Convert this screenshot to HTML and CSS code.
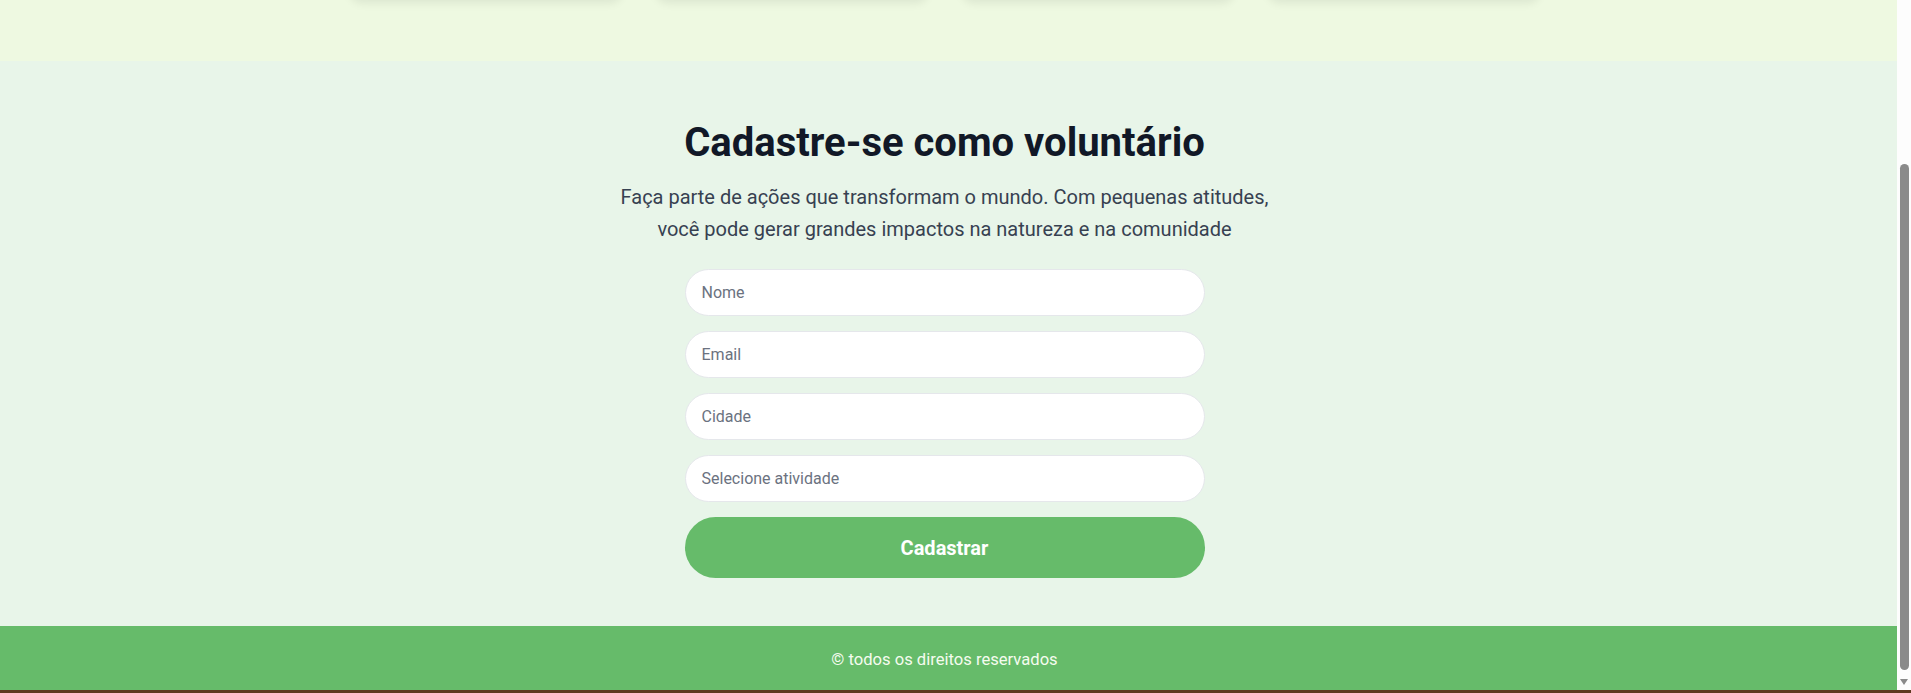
FILE: index.html
```html
<!DOCTYPE html>
<html lang="pt-BR">
<head>
<meta charset="utf-8">
<title>Voluntários</title>
<link rel="stylesheet" href="styles.css">
</head>
<body>
<div class="janela">
  <div class="pagina">
    <section class="acoes">
      <div class="cards">
        <div class="card"></div>
        <div class="card"></div>
        <div class="card"></div>
        <div class="card"></div>
      </div>
    </section>
    <section class="cadastro">
      <h2 class="titulo">Cadastre-se como voluntário</h2>
      <p class="texto">Faça parte de ações que transformam o mundo. Com pequenas atitudes, você pode gerar grandes impactos na natureza e na comunidade</p>
      <form class="form">
        <input class="campo" type="text" placeholder="Nome">
        <input class="campo" type="email" placeholder="Email">
        <input class="campo" type="text" placeholder="Cidade">
        <select class="campo selecao">
          <option>Selecione atividade</option>
        </select>
        <button class="botao" type="button">Cadastrar</button>
      </form>
    </section>
    <footer class="rodape">© todos os direitos reservados</footer>
  </div>
  <div class="barra" aria-hidden="true">
    <div class="polegar"></div>
    <div class="seta"></div>
  </div>
</div>
<div class="borda"></div>
<script src="script.js"></script>
</body>
</html>
```
FILE: styles.css
```css
* { box-sizing: border-box; }
html, body {
  margin: 0;
  padding: 0;
  height: 100%;
  overflow: hidden;
}
body {
  font-family: Roboto, "Liberation Sans", sans-serif;
  background: #e8f5e9;
  display: flex;
  flex-direction: column;
}
.janela {
  height: 690px;
  display: flex;
}
.pagina {
  flex: 1;
  height: 690px;
  overflow-y: scroll;
  scrollbar-width: none;
}
.pagina::-webkit-scrollbar { display: none; }
.barra {
  width: 14px;
  background: #fdfdfd;
  display: flex;
  flex-direction: column;
  align-items: center;
  padding-top: 164px;
}
.polegar {
  width: 9px;
  height: 506px;
  border-radius: 5px;
  background: #8a8a8a;
}
.seta {
  margin-top: 9px;
  width: 0;
  height: 0;
  border-left: 4.5px solid transparent;
  border-right: 4.5px solid transparent;
  border-top: 6px solid #8a8a8a;
}
.borda {
  height: 3px;
  background: #5d3a1f;
}
.acoes {
  background: #eef9e1;
  padding: 60px 8px 61px 0;
}
.cards {
  max-width: 1190px;
  margin: 0 auto;
  display: grid;
  grid-template-columns: repeat(4, 1fr);
  gap: 34px;
}
.card {
  height: 152px;
  background: #ffffff;
  border-radius: 12px;
  box-shadow: 0 3px 10px rgba(0, 0, 0, 0.08);
}
.cadastro {
  background: #e8f5e9;
  padding: 58px 28px 48px 20px;
  display: flex;
  flex-direction: column;
  align-items: center;
}
.titulo {
  margin: 0 0 15px;
  font-size: 40px;
  font-weight: 700;
  color: #111827;
  line-height: normal;
}
.texto {
  margin: 0 0 24px;
  max-width: 660px;
  text-align: center;
  font-size: 20px;
  line-height: 32px;
  color: #374151;
}
.form {
  width: 520px;
  display: flex;
  flex-direction: column;
  gap: 15px;
}
.campo {
  height: 47px;
  padding: 0 16px;
  border: 1px solid #e5e7eb;
  border-radius: 24px;
  background: #ffffff;
  font-family: inherit;
  font-size: 16px;
  color: #6b7280;
  outline: none;
}
.campo::placeholder { color: #6b7280; }
.selecao {
  appearance: none;
  -webkit-appearance: none;
}
.botao {
  height: 61px;
  border: none;
  border-radius: 31px;
  background: #66bb6a;
  color: #ffffff;
  font-family: inherit;
  font-size: 20px;
  font-weight: 700;
}
.rodape {
  background: #66bb6a;
  color: #f5fbef;
  text-align: center;
  font-size: 16.6px;
  height: 64px;
  padding: 24px 8px 0 0;
}
```
FILE: script.js
```js
var pagina = document.querySelector('.pagina');
pagina.scrollTop = pagina.scrollHeight;
```
